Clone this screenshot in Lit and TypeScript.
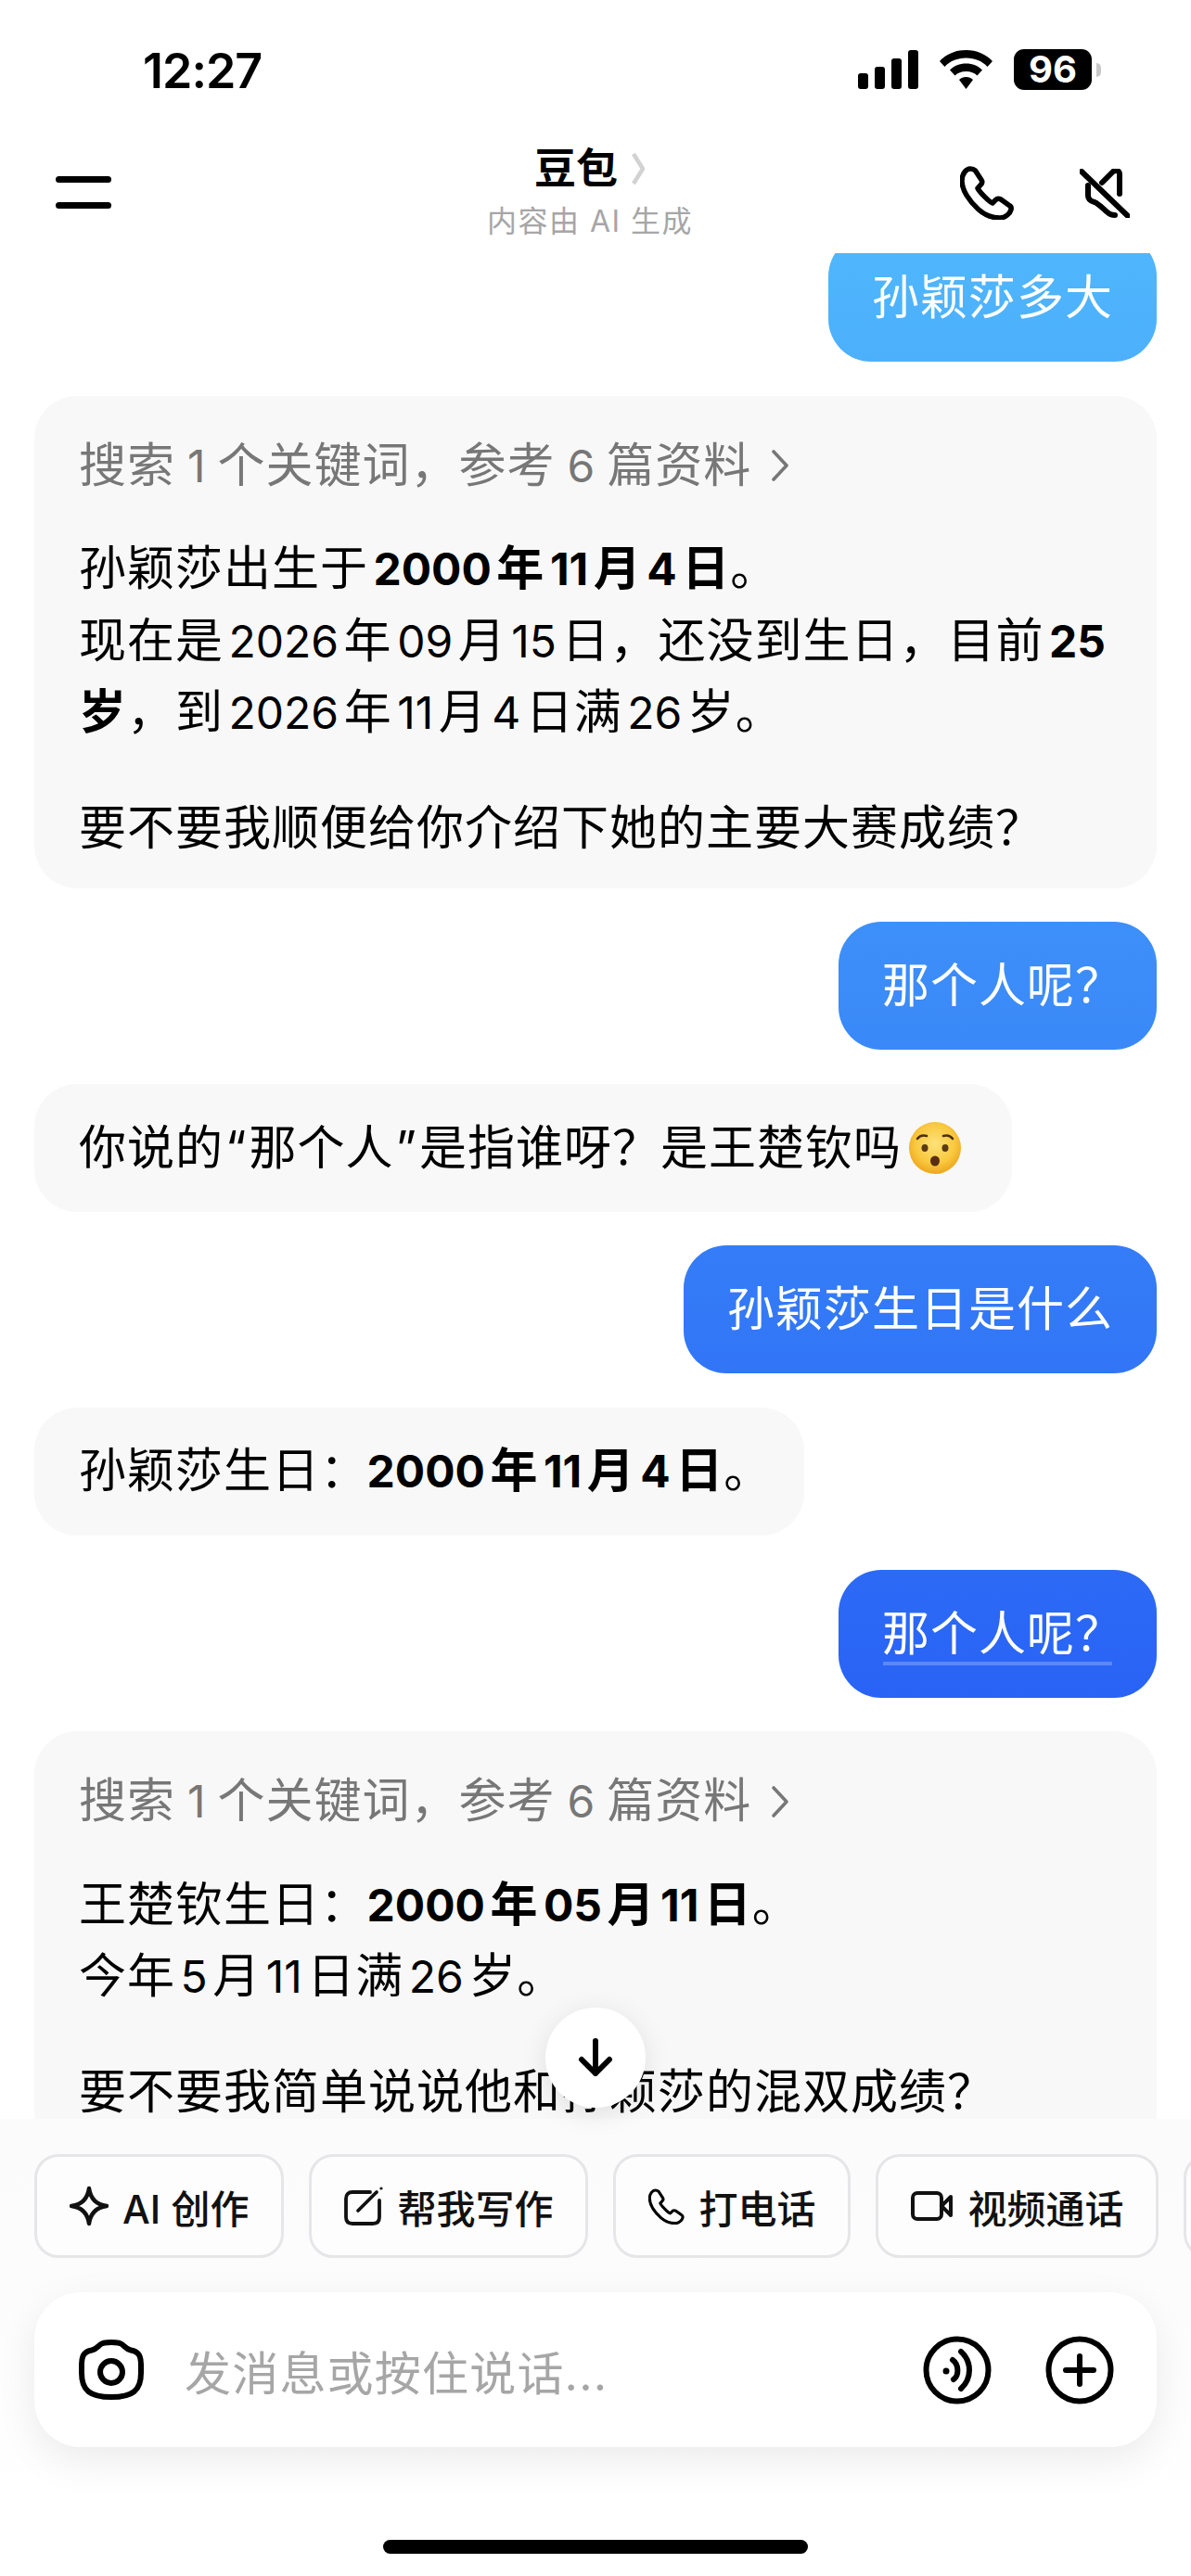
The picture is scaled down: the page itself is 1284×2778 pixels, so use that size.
import { LitElement, html, css } from "lit";
import { customElement } from "lit/decorators.js";

const rich = (s: string) =>
  s.split(/(\d+)/).map((p, i) => (i % 2 ? html`<span class="num">${p}</span>` : p));

const phonePath = "M11 3C7 3 2 8 2 16C2 26 10 38 20 47C28 54 37 56 43 56C49 56 54 51 55 47C55.5 45 55 43.5 53 42.5L44 36C42 35 40 35 38.5 36.5L35 40C31 38.5 21 28 19 24L22.5 20C24 18.5 24 16.5 23 15L16.5 5C15 3.5 13 3 11 3Z";

const phone = (size: number, sw: number) => html`<svg class="ic" width=${size} height=${size} viewBox="0 0 58 58" fill="none" stroke="#000" stroke-width=${sw} stroke-linejoin="round"><path d=${phonePath}></path></svg>`;

const chips = [
  { label: "AI 创作", icon: html`<svg class="ic" width="42" height="44" viewBox="1 0 42 44" fill="none" stroke="#111" stroke-width="4.5" stroke-linejoin="round"><path d="M22 3C23.5 14 30 20.5 41 22C30 23.5 23.5 30 22 41C20.5 30 14 23.5 3 22C14 20.5 20.5 14 22 3Z"></path></svg>` },
  { label: "帮我写作", icon: html`<svg class="ic" width="42" height="42" viewBox="0 0 42 42" fill="none" stroke="#111" stroke-width="3.8" stroke-linecap="round"><path d="M28 6H9C4.5 6 2 8.5 2 13V33C2 37.5 4.5 40 9 40H31C35.5 40 38 37.5 38 33V15"></path><path d="M15 26L35 6"></path><circle cx="40" cy="2" r="1.6" fill="#111" stroke="none"></circle></svg>` },
  { label: "打电话", icon: phone(39, 4.6) },
  { label: "视频通话", icon: html`<svg class="ic" width="46" height="32" viewBox="0 0 46 32" fill="none" stroke="#111" stroke-width="4" stroke-linejoin="round"><rect x="2" y="2" width="31" height="28" rx="5"></rect><path d="M33 16L43 6V26Z"></path></svg>` },
];

@customElement("app-root")
export class AppRoot extends LitElement {
  static styles = css`
    :host { display: block; width: 1284px; height: 2778px; overflow: hidden; background: #fff; color: #000;
      font-family: Inter, "Noto Sans CJK SC", sans-serif; }
    .page { display: flex; flex-direction: column; height: 2778px; }
    .ic { display: block; flex: none; }

    .status { height: 152px; box-sizing: border-box; padding: 53px 97px 0 154px; display: flex; justify-content: space-between; align-items: flex-start; }
    .time { font-size: 52px; font-weight: 600; line-height: 44px; letter-spacing: -1px; margin-top: 2px; }
    .sys { display: flex; align-items: center; }
    .wifi { margin: 0 23px 0 22px; }
    .batt { width: 84px; height: 44px; background: #000; border-radius: 11px; color: #fff; font-weight: 700; font-size: 40px;
      line-height: 44px; text-align: center; }
    .nub { width: 5px; height: 15px; background: #c8c8c8; border-radius: 0 8px 8px 0; margin-left: 5px; }

    .nav { height: 121px; box-sizing: border-box; padding: 0 72px 0 60px; display: grid; grid-template-columns: 1fr auto 1fr; align-items: start; }
    .menu { display: flex; flex-direction: column; gap: 21px; margin-top: 38px; }
    .menu i { display: block; width: 60px; height: 7px; border-radius: 4px; background: #000; }
    .ttl { display: flex; flex-direction: column; align-items: center; }
    .ttlrow { display: flex; align-items: center; gap: 14px; height: 50px; margin-top: 5px; }
    .ttlrow b { font-size: 45px; font-weight: 700; line-height: 50px; }
    .sub { font-size: 32px; line-height: 40px; color: #a6a6a6; letter-spacing: 1.5px; margin-top: 12px; }
    .acts { display: flex; justify-content: flex-end; align-items: center; gap: 71px; margin: 27px -6px 0 0; }

    .list { flex: 1; min-height: 0; overflow: hidden; box-sizing: border-box; padding: 0 37px; display: flex; flex-direction: column; gap: 36.6px;
      font-size: 51px; letter-spacing: 1px; line-height: 76.5px; }
    .list > :first-child { margin-top: -21px; }
    .me, .ai { flex: none; box-sizing: border-box; border-radius: 46px; }
    .me { align-self: flex-end; padding: 31px 47px; height: 138px; color: #fff; white-space: nowrap;
      background: linear-gradient(180deg, #4fb6fc 270px, #2963f5 1830px) fixed; }
    .q { display: inline-block; width: 249px; white-space: nowrap; }
    .q.u { background: linear-gradient(#5c88f7, #5c88f7) no-repeat left 1px bottom 4px / 247px 4px; }
    .ai { align-self: flex-start; background: #f8f8f8; padding: 31px 48px; height: 138px; white-space: nowrap; display: flex; align-items: center; }
    .ai.em { padding-right: 55px; }
    .ai.tight { padding-right: 35px; }
    .qm { margin: 0 2px; }
    .cn { margin-right: -7px; }
    .emoji { margin-left: 8px; }
    .card { background: #f8f8f8; border-radius: 46px; padding: 37px 48px 30px; flex: none; box-sizing: border-box; height: 531px; }
    .card.open { height: auto; }
    .src { color: #777; display: flex; align-items: center; gap: 21px; margin-bottom: 34px; white-space: nowrap; }
    .card p { margin: 0; white-space: nowrap; }
    .card p + p { margin-top: 47px; }
    .num { font-size: 48px; margin: 0 5.5px; letter-spacing: 0; }
    .src .num { margin: 0 13px; }
    b { font-weight: 700; }

    .panel { flex: none; height: 493px; box-sizing: border-box; position: relative; padding-top: 38px; display: flex; flex-direction: column;
      background: linear-gradient(180deg, #fbfbfb 0, #fcfcfd 170px, #fff 420px); }
    .down { position: absolute; left: 588px; top: -120px; width: 108px; height: 108px; border-radius: 50%; background: #fff;
      box-shadow: 0 6px 30px rgba(0, 0, 0, .1); display: flex; align-items: center; justify-content: center; }
    .chips { display: flex; gap: 27px; padding-left: 37px; overflow: hidden; flex: none; }
    .chip { flex: none; height: 112px; box-sizing: border-box; border: 3px solid #e6e6e8; border-radius: 26px; background: #fdfdfe; padding: 0 35px;
      display: flex; align-items: center; gap: 15px; font-size: 42px; font-weight: 500; color: #111; white-space: nowrap; }
    .chip.more { width: 80px; }
    .input { flex: none; height: 167px; box-sizing: border-box; margin: 37px 37px 0; background: #fff; border-radius: 50px; box-shadow: 0 14px 44px rgba(0, 0, 0, .08);
      display: flex; align-items: center; padding: 0 46px 0 48px; }
    .ph { flex: 1; margin-left: 44px; font-size: 50px; color: #a6a6a6; letter-spacing: 1.2px; }
    .input .v { margin-right: 58px; }
    .home { flex: none; width: 458px; height: 15px; border-radius: 8px; background: #000; margin: 100px auto 0; }
  `;

  render() {
    const chev = html`<svg class="ic" width="20" height="36" viewBox="0 0 20 36" fill="none" stroke="#777" stroke-width="3.6" stroke-linecap="round" stroke-linejoin="round"><path d="M3 3L17 18L3 33"></path></svg>`;
    const src = html`<div class="src"><span>${rich("搜索1个关键词\uFF0C参考6篇资料")}</span>${chev}</div>`;
    return html`<div class="page">
      <div class="status">
        <div class="time">12:27</div>
        <div class="sys">
          <svg class="ic" width="66" height="42" viewBox="0 0 66 42" fill="#000"><rect x="0" y="25" width="11" height="17" rx="3"></rect><rect x="18" y="18" width="11" height="24" rx="3"></rect><rect x="36" y="9" width="11" height="33" rx="3"></rect><rect x="54" y="0" width="11" height="42" rx="3"></rect></svg>
          <svg class="ic wifi" width="57" height="42" viewBox="0 0 57 42" fill="#000"><path d="M28.5 0C40 0 50 4.5 57 12L51.5 18C46 12 38 8.5 28.5 8.5C19 8.5 11 12 5.5 18L0 12C7 4.5 17 0 28.5 0Z"></path><path d="M28.5 14.5C35.5 14.5 41.5 17 46 21.5L40.5 27.5C37.5 24.5 33.5 23 28.5 23C23.5 23 19.5 24.5 16.5 27.5L11 21.5C15.5 17 21.5 14.5 28.5 14.5Z"></path><path d="M28.5 29C31.5 29 34 30 36 32L28.5 42L21 32C23 30 25.5 29 28.5 29Z"></path></svg>
          <div class="batt">96</div>
          <div class="nub"></div>
        </div>
      </div>
      <div class="nav">
        <div class="menu"><i></i><i></i></div>
        <div class="ttl">
          <div class="ttlrow"><b>豆包</b><svg class="ic" width="16" height="36" viewBox="0 0 16 36" fill="none" stroke="#d2d2d2" stroke-width="4.5" stroke-linejoin="round"><path d="M3 2L13 18L3 34"></path></svg></div>
          <div class="sub">内容由 AI 生成</div>
        </div>
        <div class="acts">
          ${phone(58, 5.5)}
          <svg class="ic" width="54" height="53" viewBox="0 0 54 53" fill="none" stroke="#000" stroke-width="6" stroke-linecap="round" stroke-linejoin="round"><path d="M2 3L52 51"></path><path d="M24 15L36 3C39 1 43 2 43 6V27"></path><path d="M9 18V29C9 33 12 35 16 36C21 38 25 43 30 47C32 49 35 50 38 50"></path></svg>
        </div>
      </div>

      <div class="list">
        <div class="me">孙颖莎多大</div>
        <div class="card">
          ${src}
          <p>孙颖莎出生于<b>${rich("2000年11月4日")}</b>。<br>现在是${rich("2026年09月15日")}&#xFF0C;还没到生日&#xFF0C;目前<b>${rich("25")}<br>岁</b>&#xFF0C;到${rich("2026年11月4日满26岁")}。</p>
          <p>要不要我顺便给你介绍下她的主要大赛成绩&#xFF1F;</p>
        </div>
        <div class="me"><span class="q">那个人呢&#xFF1F;</span></div>
        <div class="ai em"><span>你说的<span class="qm">“</span>那个人<span class="qm">”</span>是指谁呀&#xFF1F;是王楚钦吗</span>
          <svg class="ic emoji" width="56" height="56" viewBox="0 0 56 56">
            <defs><radialGradient id="f" cx="50%" cy="42%" r="58%"><stop offset="0" stop-color="#fde27a"></stop><stop offset=".65" stop-color="#f9c93f"></stop><stop offset="1" stop-color="#eda61f"></stop></radialGradient></defs>
            <circle cx="28" cy="28" r="28" fill="url(#f)"></circle>
            <path d="M9 18C12 14 16 14 19 15M37 15C40 14 44 14 47 18" fill="none" stroke="#4a2f12" stroke-width="2.5" stroke-linecap="round"></path>
            <ellipse cx="17" cy="28" rx="3.5" ry="4" fill="#5a3a14"></ellipse><ellipse cx="39" cy="28" rx="3.5" ry="4" fill="#5a3a14"></ellipse>
            <ellipse cx="28" cy="42" rx="5" ry="5.5" fill="#5a2d12"></ellipse>
          </svg>
        </div>
        <div class="me">孙颖莎生日是什么</div>
        <div class="ai tight"><span>孙颖莎生日<span class="cn">&#xFF1A;</span><b>${rich("2000年11月4日")}</b>。</span></div>
        <div class="me"><span class="q u">那个人呢&#xFF1F;</span></div>
        <div class="card open">
          ${src}
          <p>王楚钦生日<span class="cn">&#xFF1A;</span><b>${rich("2000年05月11日")}</b>。<br>今年${rich("5月11日满26岁")}。</p>
          <p>要不要我简单说说他和孙颖莎的混双成绩&#xFF1F;</p>
        </div>
      </div>

      <div class="panel">
        <div class="down"><svg class="ic" width="38" height="42" viewBox="0 0 38 42" fill="none" stroke="#000" stroke-width="6" stroke-linecap="round" stroke-linejoin="round"><path d="M19 3V38M4 23L19 38L34 23"></path></svg></div>
        <div class="chips">
          ${chips.map((c) => html`<div class="chip">${c.icon}<span>${c.label}</span></div>`)}
          <div class="chip more"></div>
        </div>
        <div class="input">
          <svg class="ic" width="70" height="65" viewBox="0 0 70 65" fill="none" stroke="#000" stroke-width="6"><path d="M3 36V27C3 17 6 13 14 11.5C19 10.5 20 8 23 5.5C25 3.5 28 3 35 3C42 3 45 3.5 47 5.5C50 8 51 10.5 56 11.5C64 13 67 17 67 27V36C67 55 58 62 35 62C12 62 3 55 3 36Z"></path><circle cx="35" cy="35" r="12"></circle></svg>
          <div class="ph">发消息或按住说话...</div>
          <svg class="ic v" width="74" height="74" viewBox="0 0 74 74" fill="none" stroke="#000" stroke-width="6" stroke-linecap="round"><circle cx="37" cy="37" r="33.5"></circle><circle cx="25" cy="38" r="3.5" fill="#000" stroke="none"></circle><path d="M32 26C39 31 39 43 33 47"></path><path d="M41 17C53 28 53 46 41 57"></path></svg>
          <svg class="ic" width="74" height="74" viewBox="0 0 74 74" fill="none" stroke="#000" stroke-width="6" stroke-linecap="round"><circle cx="37" cy="37" r="33.5"></circle><path d="M37 22V52M22 37H52"></path></svg>
        </div>
        <div class="home"></div>
      </div>
    </div>`;
  }
}
